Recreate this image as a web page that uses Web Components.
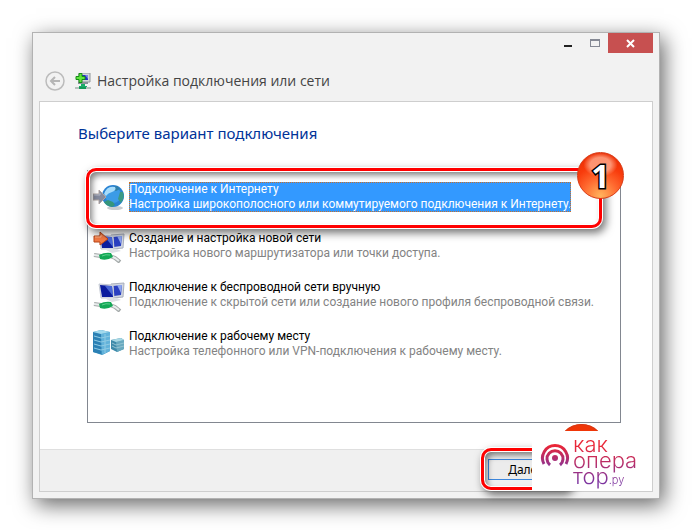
<!DOCTYPE html>
<html lang="ru">
<head>
<meta charset="utf-8">
<meta name="viewport" content="width=device-width, initial-scale=1">
<title>Настройка подключения или сети</title>
<style>
    body {
        margin: 0;
        padding: 32px;
        background: #fff;
        color: #000;
        font: 12px/15px Roboto, "Noto Sans", sans-serif;
    }
</style>
</head>
<body>
<wizard-window>
    <wizard-title slot="title">Настройка подключения или сети</wizard-title>
    <option-list heading="Выберите вариант подключения">
        <option-row icon="globe" selected>
            Подключение к Интернету
            <span slot="note">Настройка широкополосного или коммутируемого подключения к Интернету.</span>
        </option-row>
        <option-row icon="setup">
            Создание и настройка новой сети
            <span slot="note">Настройка нового маршрутизатора или точки доступа.</span>
        </option-row>
        <option-row icon="network">
            Подключение к беспроводной сети вручную
            <span slot="note">Подключение к скрытой сети или создание нового профиля беспроводной связи.</span>
        </option-row>
        <option-row icon="server">
            Подключение к рабочему месту
            <span slot="note">Настройка телефонного или VPN-подключения к рабочему месту.</span>
        </option-row>
    </option-list>
    <wizard-footer slot="footer">Далее</wizard-footer>
    <site-logo slot="footer"></site-logo>
</wizard-window>

<script>
const monitors = `
    <path d="M18 4 31 3 30 17 20 18Z" fill="#d3d8e2" stroke="#a9afbd"/>
    <path d="M20 6 29 5 28 15 21 16Z" fill="#2a3fc0"/>
    <path d="M24 5 29 5 28 13Z" fill="#8fa6ee"/>
    <path d="M6 4 20 5 21 18 8 18Z" fill="#e1e5ec" stroke="#c4c9d4"/>
    <path d="M7 5 19 6 20 17 9 17Z" fill="#0b1c9e"/>
    <path d="M12 6 19 6 20 16Z" fill="#4967d6"/>
    <path d="M13 19 24 18 28 20 19 22Z" fill="#dcdfe5"/>
    <path d="M1 24 8 25M17 25 22 27 27 31" fill="none" stroke="#a3a8a8" stroke-width="4"/>
    <path d="M1 24 8 25M17 25 22 27 26 30" fill="none" stroke="#e8ecec" stroke-width="2"/>
    <path d="M6 24Q12 21 18 22L20 26Q14 30 7 28Z" fill="#14a856"/>
    <path d="M9 25Q13 23 17 24" fill="none" stroke="#5bd18c"/>`;

const icons = {
    globe: `
        <ellipse cx="22" cy="26" rx="8" ry="2" fill="#c9ccd0"/>
        <circle cx="20" cy="14" r="11" fill="#2a82d2"/>
        <circle cx="20" cy="13" r="8" fill="#3b9be6"/>
        <path d="M11 20 15 18 20 20 22 23 19 25Q13 24 11 20Z" fill="#35957b"/>
        <path d="M27 10 30 10Q32 16 28 21L25 17Z" fill="#3a9a86"/>
        <path d="M20 5 24 4 27 7 23 9 20 8Z" fill="#2f7fa8"/>
        <path d="M11 12Q14 3 22 5Q24 8 19 10 15 11 13 14Z" fill="#a6dcfb"/>
        <path d="M0 12H6V8L13 15 6 22V18H0Z" fill="#858b9e" stroke="#b0a5a2"/>
        <path d="M1 13H7V11" fill="none" stroke="#b3b8c5"/>`,
    network: monitors,
    setup: monitors + `
        <path d="M1 5H7V1L15 8 7 14V11H1Z" fill="#f47b45" stroke="#b74417"/>
        <path d="M2 6H8V4" fill="none" stroke="#ffb58c"/>`,
    server: `
        <path d="M0 3 8 1 17 3 17 22 9 26 0 23Z" fill="#3890bf"/>
        <path d="M0 3 8 5V25L0 23Z" fill="#2b80b4"/>
        <path d="M8 5 17 3V22L9 26Z" fill="#62b2da"/>
        <path d="M0 3 8 1 17 3 8 5Z" fill="#a2d9ed"/>
        <path d="M1 7 8 9 17 7M1 11 8 13 17 11M1 15 8 17 17 15M1 19 8 21 17 19M12 5V24" fill="none" stroke="#8fcbe4"/>
        <path d="M18 11 28 9 31 11V20L24 23 18 20Z" fill="#3c89a9"/>
        <path d="M23 13 31 11V20L24 23Z" fill="#68a9c0"/>
        <path d="M18 11 28 9 31 11 23 13Z" fill="#a8d8e4"/>
        <path d="M19 14 23 16 31 14M19 17 23 19 31 17" fill="none" stroke="#93c3d2"/>`
};

/** Outer frame: caption buttons, title row, content panel and footer. */
class WizardWindow extends HTMLElement {
    constructor() {
        super();
        this.attachShadow({ mode: "open" });
    }

    connectedCallback() {
        this.shadowRoot.innerHTML = `
            <style>
                :host {
                    display: block;
                    border: 1px solid #b2b2b2;
                    background: #f2f2f2;
                    padding: 0 6px 6px;
                    box-shadow: 4px 6px 20px rgba(0, 0, 0, 0.6);
                }
                .caption {
                    display: flex;
                    justify-content: flex-end;
                    height: 20px;
                }
                .caption button {
                    width: 27px;
                    padding: 0;
                    border: 0;
                    background: none;
                }
                .caption .close { width: 45px; background: #c75050; }
                .caption svg { display: block; margin: 0 auto; }
                .panel {
                    border: 1px solid #cecece;
                    background: #fff;
                }
                .footer {
                    position: relative;
                    display: flex;
                    justify-content: flex-end;
                    padding: 9px 88px 11px 0;
                    border-top: 1px solid #dfdfdf;
                    background: #f0f0f0;
                }
            </style>
            <div class="caption">
                <button aria-label="Свернуть"><svg width="10" height="20"><path d="M1 12H9V14H1Z" fill="#222"/></svg></button>
                <button aria-label="Развернуть"><svg width="10" height="20"><path d="M0 6H10V14H0ZM1 8V13H9V8Z" fill="#858994" fill-rule="evenodd"/></svg></button>
                <button class="close" aria-label="Закрыть"><svg width="10" height="20"><path d="M1 7 8 14M8 7 1 14" stroke="#fff" stroke-width="2"/></svg></button>
            </div>
            <slot name="title"></slot>
            <div class="panel">
                <slot></slot>
                <div class="footer"><slot name="footer"></slot></div>
            </div>
        `;
    }
}

/** Back button, network icon and the wizard's name. */
class WizardTitle extends HTMLElement {
    constructor() {
        super();
        this.attachShadow({ mode: "open" });
    }

    connectedCallback() {
        this.shadowRoot.innerHTML = `
            <style>
                :host {
                    display: flex;
                    align-items: center;
                    height: 48px;
                    padding: 7px 0 0 6px;
                    box-sizing: border-box;
                    color: #444;
                    font: 14px/20px "Open Sans", "Noto Sans", sans-serif;
                }
                button { display: block; padding: 0; border: 0; background: none; }
                svg { display: block; }
                .net { margin: 0 6px 0 10px; }
            </style>
            <button aria-label="Назад">
                <svg width="20" height="20" fill="none">
                    <circle cx="10" cy="10" r="9" stroke="#bcbcbc" stroke-width="1.5"/>
                    <path d="M15 10H6M10 6 6 10 10 14" stroke="#b5b5b5" stroke-width="2"/>
                </svg>
            </button>
            <svg class="net" width="16" height="16">
                <path d="M4 0H15V9H4Z" fill="#d5d8db" stroke="#8f969a"/>
                <path d="M7 2H13V7H7Z" fill="#252ec5"/>
                <path d="M10 2H13V6Z" fill="#7987e8"/>
                <path d="M3 9H13V11H3Z" fill="#899398"/>
                <path d="M6 11H10V13H12V15H4V13H6Z" fill="#18ac68"/>
                <path d="M0 14H16V16H0Z" fill="#b5c0bc"/>
                <path d="M4 14H11V16H4Z" fill="#149a58"/>
                <path d="M4 .5H7V3.500H10V6.500H7V9.500H4V6.500H1V3.500H4Z" fill="#5fe63c" stroke="#168b18"/>
            </svg>
            <slot></slot>
        `;
    }
}

/** Heading and the bordered list of connection types. */
class OptionList extends HTMLElement {
    constructor() {
        super();
        this.attachShadow({ mode: "open" });
    }

    connectedCallback() {
        this.shadowRoot.innerHTML = `
            <style>
                :host { display: block; padding: 20px 31px 26px 38px; }
                h1 {
                    margin: 0 0 26px;
                    color: #003399;
                    font: 400 15px/22px "Noto Sans", "Open Sans", sans-serif;
                }
                .list {
                    position: relative;
                    display: flex;
                    flex-direction: column;
                    gap: 17px;
                    min-height: 253px;
                    box-sizing: border-box;
                    margin-left: 9px;
                    padding: 11px 5px;
                    border: 1px solid #828790;
                }
                callout-ring { position: absolute; left: -2px; top: -3px; right: 18px; height: 60px; }
            </style>
            <h1>${this.getAttribute("heading")}</h1>
            <div class="list">
                <slot></slot>
                <callout-ring><step-badge>1</step-badge></callout-ring>
            </div>
        `;
    }
}

class OptionRow extends HTMLElement {
    constructor() {
        super();
        this.attachShadow({ mode: "open" });
    }

    connectedCallback() {
        this.shadowRoot.innerHTML = `
            <style>
                :host { display: block; }
                button {
                    display: flex;
                    align-items: flex-start;
                    gap: 4px;
                    padding: 0;
                    border: 0;
                    background: none;
                    color: inherit;
                    font: inherit;
                    text-align: left;
                }
                svg { flex: none; display: block; }
                .text { display: block; white-space: nowrap; }
                .note { display: block; color: #838383; }
                :host([selected]) .text {
                    background: #3399ff;
                    color: #fff;
                    outline: 1px dotted #c8702a;
                    outline-offset: -1px;
                }
                :host([selected]) .note { color: #fff; }
            </style>
            <button>
                <svg width="32" height="32">${icons[this.getAttribute("icon")]}</svg>
                <span class="text"><slot></slot><span class="note"><slot name="note"></slot></span></span>
            </button>
        `;
    }
}

/** Red frame that marks a control. */
class CalloutRing extends HTMLElement {
    constructor() {
        super();
        this.attachShadow({ mode: "open" });
    }

    connectedCallback() {
        this.shadowRoot.innerHTML = `
            <style>
                :host {
                    display: block;
                    box-sizing: border-box;
                    border: 3px solid #ff0000;
                    border-radius: 10px;
                    box-shadow: 0 0 0 1px #fff, 3px 4px 8px 1px rgba(0, 0, 0, 0.55),
                        inset 0 0 0 1px #fff, inset 3px 4px 6px rgba(0, 0, 0, 0.5);
                    pointer-events: none;
                }
                ::slotted(step-badge) { position: absolute; right: -25px; top: -19px; }
            </style>
            <slot></slot>
        `;
    }
}

class StepBadge extends HTMLElement {
    constructor() {
        super();
        this.attachShadow({ mode: "open" });
    }

    connectedCallback() {
        this.shadowRoot.innerHTML = `
            <style>
                :host {
                    display: grid;
                    place-items: center;
                    width: 47px;
                    height: 47px;
                    box-sizing: border-box;
                    border: 1px solid #d83a16;
                    border-radius: 50%;
                    background:
                        radial-gradient(ellipse 17px 12px at 50% 26%, rgba(255, 170, 140, 0.8) 60%, transparent 100%),
                        radial-gradient(circle at 50% 95%, #ffb45e 0, #ff6a30 35%, #f83b0c 62%, #e62800 100%);
                    color: #fff;
                    font: 700 32px/44px "Open Sans", sans-serif;
                    -webkit-text-stroke: 3px #000;
                    paint-order: stroke fill;
                }
            </style>
            <slot></slot>
        `;
    }
}

class WizardFooter extends HTMLElement {
    constructor() {
        super();
        this.attachShadow({ mode: "open" });
    }

    connectedCallback() {
        this.shadowRoot.innerHTML = `
            <style>
                :host { display: block; position: relative; }
                button {
                    display: block;
                    min-width: 76px;
                    height: 21px;
                    padding: 0 12px;
                    border: 1px solid #3c86dc;
                    background: #ececec;
                    color: #000;
                    font: 12px/19px "Noto Sans", "Open Sans", sans-serif;
                }
                callout-ring { position: absolute; left: -7px; right: -7px; top: -11px; height: 42px; }
                .cap {
                    position: absolute;
                    left: 70px;
                    top: -35px;
                    width: 47px;
                    height: 47px;
                    border-radius: 50%;
                    background: #f03608;
                    box-shadow: inset 0 0 0 1px #d83a16;
                }
            </style>
            <button><slot></slot></button>
            <callout-ring></callout-ring>
            <div class="cap"></div>
        `;
    }
}

class SiteLogo extends HTMLElement {
    constructor() {
        super();
        this.attachShadow({ mode: "open" });
    }

    connectedCallback() {
        this.shadowRoot.innerHTML = `
            <style>
                :host {
                    position: absolute;
                    right: 0;
                    bottom: 0;
                    display: flex;
                    gap: 3px;
                    width: 120px;
                    height: 60px;
                    padding: 0 0 0 8px;
                    box-sizing: border-box;
                    background: #fff;
                }
                svg { flex: none; display: block; margin-top: 12px; }
                .name {
                    margin-top: 5px;
                    color: transparent;
                    background: linear-gradient(#ea2637 10px, #7d35a0 46px);
                    background-clip: text;
                    -webkit-background-clip: text;
                    font: 300 22px/16px Inter, sans-serif;
                    height: 55px;
                }
                small { font-size: 11px; }
            </style>
            <svg width="30" height="30" fill="none" stroke="url(#tone)" stroke-width="3">
                <linearGradient id="tone" gradientUnits="userSpaceOnUse" x1="0" y1="2" x2="0" y2="24">
                    <stop stop-color="#ed2433"/><stop offset="1" stop-color="#8b3496"/>
                </linearGradient>
                <path d="M4 21A12.5 12.5 0 1 1 26 21"/>
                <path d="M10 22A8 8 0 1 1 20 22"/>
                <circle cx="15" cy="15" r="3" fill="url(#tone)" stroke="none"/>
            </svg>
            <div class="name">как<br>опера<br>тор<small>.ру</small></div>
        `;
    }
}

customElements.define("wizard-window", WizardWindow);
customElements.define("wizard-title", WizardTitle);
customElements.define("option-list", OptionList);
customElements.define("option-row", OptionRow);
customElements.define("callout-ring", CalloutRing);
customElements.define("step-badge", StepBadge);
customElements.define("wizard-footer", WizardFooter);
customElements.define("site-logo", SiteLogo);
</script>
</body>
</html>
